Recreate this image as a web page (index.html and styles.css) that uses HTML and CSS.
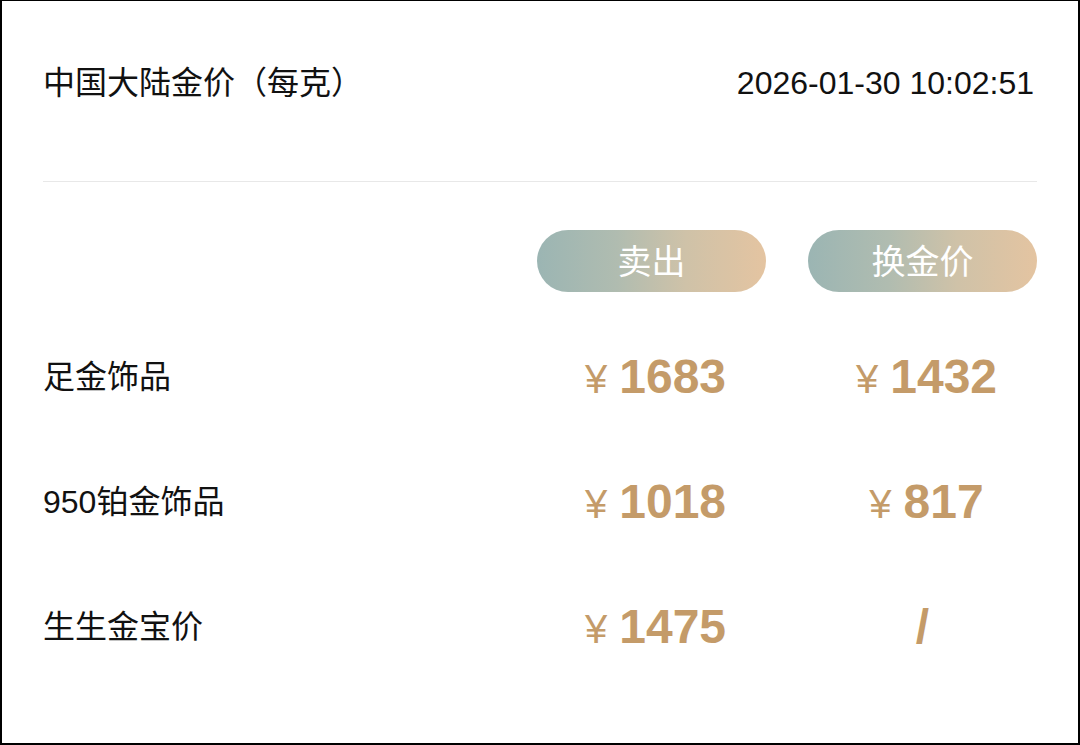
FILE: index.html
```html
<!DOCTYPE html>
<html lang="zh-CN">
<head>
<meta charset="utf-8">
<title>中国大陆金价</title>
<link rel="stylesheet" href="styles.css">
</head>
<body>
<div class="frame">
  <div class="header">
    <div class="title">中国大陆金价（每克）</div>
    <div class="time">2026-01-30 10:02:51</div>
  </div>
  <div class="table">
    <div class="row head">
      <div class="label"></div>
      <div class="pill">卖出</div>
      <div class="pill">换金价</div>
    </div>
    <div class="row">
      <div class="label">足金饰品</div>
      <div class="price"><span class="yen">¥</span><span class="num">1683</span></div>
      <div class="price"><span class="yen">¥</span><span class="num">1432</span></div>
    </div>
    <div class="row">
      <div class="label">950铂金饰品</div>
      <div class="price"><span class="yen">¥</span><span class="num">1018</span></div>
      <div class="price"><span class="yen">¥</span><span class="num">817</span></div>
    </div>
    <div class="row">
      <div class="label">生生金宝价</div>
      <div class="price"><span class="yen">¥</span><span class="num">1475</span></div>
      <div class="price empty"><span class="num">/</span></div>
    </div>
  </div>
</div>
</body>
</html>
```

FILE: styles.css
```css
* { box-sizing: border-box; }
html, body { margin: 0; padding: 0; background: #fff; }
body {
  width: 1080px;
  height: 745px;
  font-family: "Liberation Sans", "Noto Sans CJK SC", sans-serif;
  color: #111;
}
.frame {
  width: 1080px;
  height: 745px;
  border-top: 1px solid #000;
  border-left: 2px solid #000;
  border-right: 2px solid #000;
  border-bottom: 2px solid #000;
  padding: 0 41px 0 41px;
}
.header {
  display: flex;
  justify-content: space-between;
  align-items: center;
  padding-top: 62px;
  padding-bottom: 78px;
  border-bottom: 1px solid #e8e8e8;
}
.title {
  font-size: 32px;
  line-height: 40px;
}
.time {
  font-size: 32px;
  line-height: 40px;
  padding-right: 3px;
}
.table {
  padding-top: 48px;
}
.row {
  display: grid;
  grid-template-columns: 1fr 229px 229px;
  column-gap: 42px;
  align-items: center;
  height: 125px;
}
.row.head {
  height: 62px;
  margin-bottom: 22px;
}
.label {
  font-size: 32px;
  line-height: 40px;
}
.pill {
  height: 62px;
  border-radius: 31px;
  background: linear-gradient(90deg, #9bb5b3 0%, #b0bcb0 35%, #cfc2a8 65%, #e4c4a1 100%);
  color: #fff;
  font-size: 34px;
  display: flex;
  align-items: center;
  justify-content: center;
  padding-bottom: 4px;
}
.price {
  text-align: center;
  color: #c49b69;
  white-space: nowrap;
  padding-left: 8px;
}
.price.empty {
  padding-left: 0;
}
.yen {
  font-size: 40px;
  font-weight: 400;
  margin-right: 12px;
}
.num {
  font-size: 48px;
  font-weight: 700;
}
```
